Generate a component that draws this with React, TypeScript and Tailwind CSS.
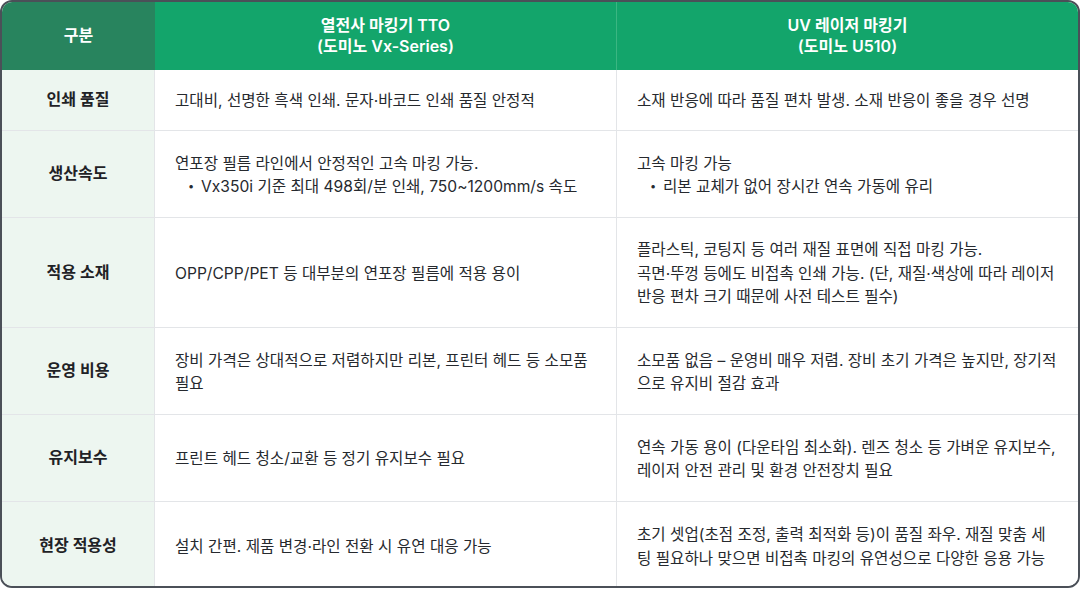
import React from 'react';

// 셀 안의 한 줄 또는 글머리표 줄
type Line = string | { bullet: string };

interface Row {
  label: string;
  tto: Line[];
  uv: Line[];
}

const rows: Row[] = [
  {
    label: '인쇄 품질',
    tto: ['고대비, 선명한 흑색 인쇄. 문자·바코드 인쇄 품질 안정적'],
    uv: ['소재 반응에 따라 품질 편차 발생. 소재 반응이 좋을 경우 선명'],
  },
  {
    label: '생산속도',
    tto: ['연포장 필름 라인에서 안정적인 고속 마킹 가능.', { bullet: 'Vx350i 기준 최대 498회/분 인쇄, 750~1200mm/s 속도' }],
    uv: ['고속 마킹 가능', { bullet: '리본 교체가 없어 장시간 연속 가동에 유리' }],
  },
  {
    label: '적용 소재',
    tto: ['OPP/CPP/PET 등 대부분의 연포장 필름에 적용 용이'],
    uv: [
      '플라스틱, 코팅지 등 여러 재질 표면에 직접 마킹 가능.',
      '곡면·뚜껑 등에도 비접촉 인쇄 가능. (단, 재질·색상에 따라 레이저',
      '반응 편차 크기 때문에 사전 테스트 필수)',
    ],
  },
  {
    label: '운영 비용',
    tto: ['장비 가격은 상대적으로 저렴하지만 리본, 프린터 헤드 등 소모품', '필요'],
    uv: ['소모품 없음 – 운영비 매우 저렴. 장비 초기 가격은 높지만, 장기적', '으로 유지비 절감 효과'],
  },
  {
    label: '유지보수',
    tto: ['프린트 헤드 청소/교환 등 정기 유지보수 필요'],
    uv: ['연속 가동 용이 (다운타임 최소화). 렌즈 청소 등 가벼운 유지보수,', '레이저 안전 관리 및 환경 안전장치 필요'],
  },
  {
    label: '현장 적용성',
    tto: ['설치 간편. 제품 변경·라인 전환 시 유연 대응 가능'],
    uv: ['초기 셋업(초점 조정, 출력 최적화 등)이 품질 좌우. 재질 맞춤 세', '팅 필요하나 맞으면 비접촉 마킹의 유연성으로 다양한 응용 가능'],
  },
];

const Cell: React.FC<{ lines: Line[]; last: boolean; border?: boolean }> = ({ lines, last, border }) => (
  <div
    className={`flex flex-col justify-center px-5 pt-[21px] pb-[19px] bg-white ${last ? '' : 'border-b border-[#e3e5e8]'} ${
      border ? 'border-r border-[#e3e5e8]' : ''
    }`}
  >
    {lines.map((line, i) =>
      typeof line === 'string' ? (
        <div key={i} className="whitespace-nowrap">
          {line}
        </div>
      ) : (
        <div key={i} className="flex items-center whitespace-nowrap pl-[13px]">
          <span className="w-[13px] shrink-0 text-[11px]">•</span>
          <span>{line.bullet}</span>
        </div>
      )
    )}
  </div>
);

export default function App() {
  return (
    <div
      className="w-[1080px] h-[589px] bg-white text-[15.6px] leading-[23.5px] text-[#26292e]"
      style={{ fontFamily: 'Inter, "Noto Sans CJK KR", sans-serif' }}
    >
      <div className="h-[588px] border-2 border-[#4b5058] rounded-[12px] overflow-hidden grid grid-cols-[153px_462px_1fr] grid-rows-[68px_61px_87px_110px_87px_87px_1fr]">
        {/* 헤더 */}
        <div className="flex items-center justify-center bg-[#28845e] text-white font-semibold text-[16px]">구분</div>
        <div className="flex flex-col items-center justify-center bg-[#13a56b] text-white font-semibold text-[16px] leading-[21px] border-r border-[#3bb682]">
          <div>열전사 마킹기 TTO</div>
          <div>(도미노 Vx-Series)</div>
        </div>
        <div className="flex flex-col items-center justify-center bg-[#13a56b] text-white font-semibold text-[16px] leading-[21px]">
          <div>UV 레이저 마킹기</div>
          <div>(도미노 U510)</div>
        </div>

        {/* 본문 */}
        {rows.map((row, i) => {
          const last = i === rows.length - 1;
          return (
            <React.Fragment key={row.label}>
              <div
                className={`flex items-center justify-center bg-[#edf6f0] font-semibold text-[16px] text-[#1f2226] border-r border-[#e3e5e8] ${
                  last ? '' : 'border-b border-[#e3e5e8]'
                }`}
              >
                {row.label}
              </div>
              <Cell lines={row.tto} last={last} border />
              <Cell lines={row.uv} last={last} />
            </React.Fragment>
          );
        })}
      </div>
    </div>
  );
}
